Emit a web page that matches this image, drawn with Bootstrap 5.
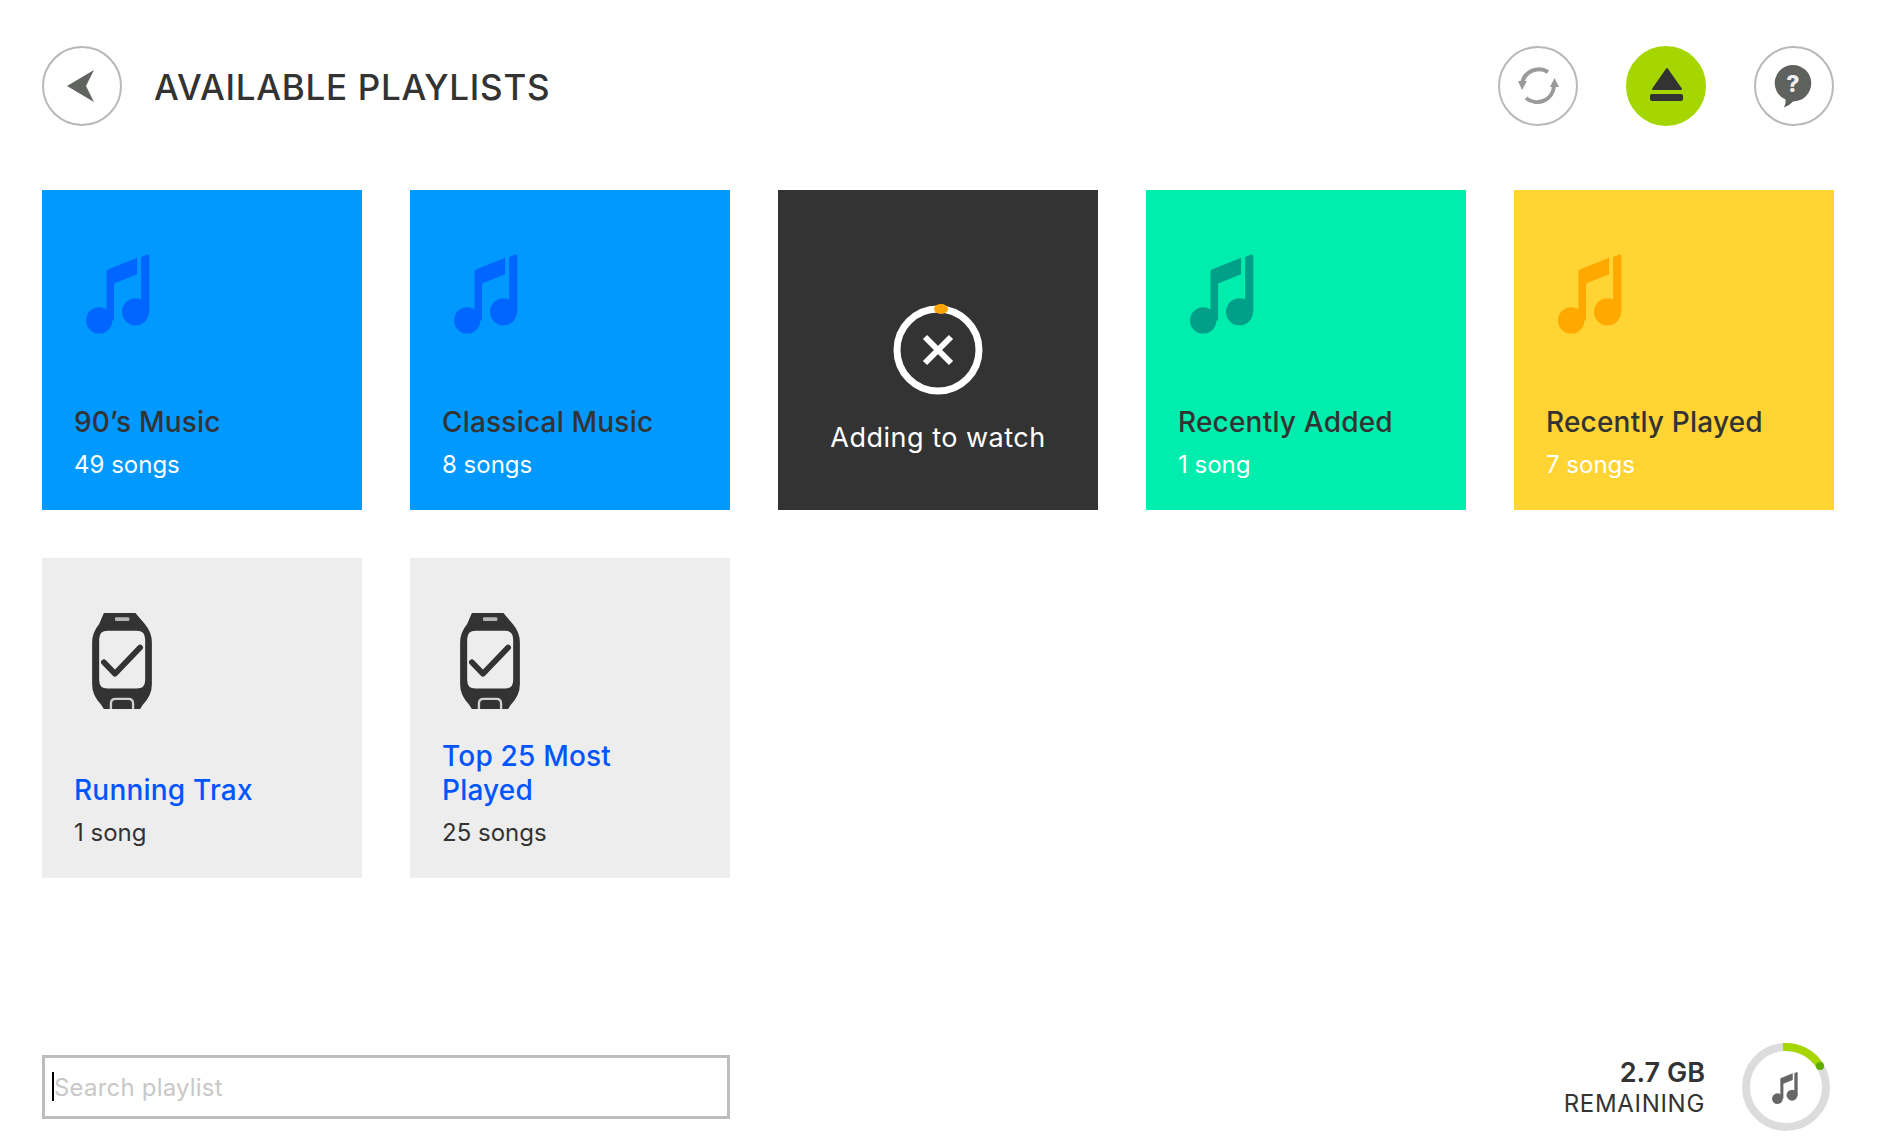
<!DOCTYPE html>
<html lang="en">
<head>
  <meta charset="UTF-8" />
  <meta name="viewport" content="width=device-width, initial-scale=1" />
  <title>Available Playlists</title>
  <link href="https://cdn.jsdelivr.net/npm/bootstrap@5.3.3/dist/css/bootstrap.min.css" rel="stylesheet" />

  <style>
    body {
      font-family: "Inter", "Liberation Sans", sans-serif;
      color: #333;
      background: #fff;
    }

    .page {
      height: 1144px;
      padding: 46px 46px 12px 42px;
    }

    .page-title {
      font-size: 35px;
      font-weight: 500;
      letter-spacing: 0.7px;
      margin: 2px 0 0 32px;
      color: #333;
    }

    .round-btn {
      width: 80px;
      height: 80px;
      padding: 0;
      border: 2px solid #b8b8b8;
      background: #fff;
      flex: none;
    }

    .round-btn svg {
      display: block;
      margin: -2px;
      width: 80px;
      height: 80px;
    }

    .round-btn.active-btn {
      background: #a6d600;
      border-color: #a6d600;
    }

    .head-actions {
      gap: 48px;
    }

    .tile-grid {
      grid-template-columns: repeat(5, 320px);
      gap: 48px;
      margin-top: 64px;
    }

    .tile {
      height: 320px;
      padding: 0 32px 28px 32px;
    }

    .tile-icon {
      display: block;
      margin: 64px 0 0 12px;
      width: 64px;
      height: 80px;
    }

    .watch-icon {
      margin: 55px 0 0 18px;
      width: 60px;
      height: 96px;
    }

    .tile-name {
      font-size: 28px;
      font-weight: 500;
      line-height: 34px;
      letter-spacing: 0.2px;
      color: #333;
    }

    .tile-count {
      font-size: 24px;
      line-height: 34px;
      margin-top: 9px;
      color: #fff;
    }

    .tile-blue { background: #0099ff; }
    .tile-blue .tile-icon { color: #0066ff; }
    .tile-teal { background: #00edae; }
    .tile-teal .tile-icon { color: #00a088; }
    .tile-yellow { background: #ffd433; }
    .tile-yellow .tile-icon { color: #ffa800; }
    .tile-grey { background: #ededed; }
    .tile-grey .tile-name { color: #0055ff; }
    .tile-grey .tile-count { color: #333; }

    .tile-busy {
      background: #333;
      color: #fff;
      padding: 0;
    }

    .busy-ring {
      width: 92px;
      height: 92px;
      margin-top: 114px;
    }

    .busy-text {
      font-size: 27px;
      font-weight: 400;
      line-height: 34px;
      letter-spacing: 0.5px;
      margin-top: 25px;
    }

    .search-box {
      width: 688px;
    }

    .search-box .form-control {
      height: 64px;
      border: 3px solid #bdbdbd;
      border-radius: 0;
      padding: 0 0 0 9px;
      font-size: 24px;
      letter-spacing: 0.2px;
      box-shadow: none;
    }

    .search-box .form-control::placeholder {
      color: #c8c8c8;
    }

    .fake-caret {
      position: absolute;
      left: 10px;
      top: 17px;
      width: 2px;
      height: 29px;
      background: #000;
    }

    .space-left {
      text-align: right;
      margin: 2px 36px 0 0;
    }

    .space-size {
      font-size: 27px;
      font-weight: 600;
      line-height: 32px;
    }

    .space-label {
      font-size: 24px;
      line-height: 30px;
      letter-spacing: 0.7px;
    }

    .space-ring {
      width: 90px;
      height: 90px;
      margin-right: 3px;
    }
  </style>
</head>

<body>
  <svg width="0" height="0" class="position-absolute">
    <defs>
      <symbol id="note" viewBox="78 58 194 240">
        <circle cx="118" cy="258" r="40" fill="currentColor" />
        <circle cx="228" cy="232" r="41" fill="currentColor" />
        <path fill="currentColor" d="M140 258V110Q140 105 146 103L233 68V118L163 146V258Z" />
        <path fill="currentColor" d="M245 66L262 59Q270 57 270 66V232H245Z" />
      </symbol>
      <symbol id="watch" viewBox="97 72 178 286">
        <path fill="#333" fill-rule="evenodd" d="M132 72H226L254 105Q275 130 275 160V285Q275 318 248 345L240 358H132L124 345Q97 318 97 285V160Q97 130 118 105ZM143 125Q118 125 118 150V272Q118 297 143 297H230Q255 297 255 272V150Q255 125 230 125Z" />
        <rect x="165" y="85" width="43" height="11" rx="4" fill="#b5b5b5" />
        <path d="M153 358V342Q153 328 167 328H205Q219 328 219 342V358" fill="none" stroke="#d0d0d0" stroke-width="7" />
        <path d="M132 219L165 253L240 175" fill="none" stroke="#333" stroke-width="17" stroke-linejoin="round" stroke-linecap="round" />
      </symbol>
    </defs>
  </svg>

  <div class="page d-flex flex-column">
    <!-- header -->
    <div class="d-flex align-items-center">
      <button type="button" class="btn round-btn rounded-circle" aria-label="Back">
        <svg viewBox="0 0 80 80"><path fill="#606360" d="M25 40L52 24L44 40L52 56Z" /></svg>
      </button>
      <h1 class="page-title">AVAILABLE PLAYLISTS</h1>
      <div class="d-flex head-actions ms-auto">
        <button type="button" class="btn round-btn rounded-circle" aria-label="Sync">
          <svg viewBox="0 0 80 80">
            <g fill="none" stroke="#9a9a9a" stroke-width="4">
              <path d="M50 26A17 17 0 0 0 24 38" />
              <path d="M28 52A17 17 0 0 0 56 40" />
            </g>
            <path fill="#9a9a9a" d="M20 35H29L24 44Z" />
            <path fill="#9a9a9a" d="M56.500 32L52 41H61Z" />
          </svg>
        </button>
        <button type="button" class="btn round-btn active-btn rounded-circle" aria-label="Eject">
          <svg viewBox="0 0 80 80">
            <path fill="#333" stroke="#333" stroke-width="2" stroke-linejoin="round" d="M41 23L27 43H55Z" />
            <rect x="24" y="48" width="33" height="7" rx="2" fill="#333" />
          </svg>
        </button>
        <button type="button" class="btn round-btn rounded-circle" aria-label="Help">
          <svg viewBox="0 0 80 80">
            <path fill="#5f615e" d="M39 19A18 18 0 0 1 39 55.500Q35 60 30 61.500Q32 57 31.500 53.500A18 18 0 0 1 39 19Z" />
            <text x="39" y="46" text-anchor="middle" font-family="Inter, sans-serif" font-size="23" font-weight="800" fill="#eee">?</text>
          </svg>
        </button>
      </div>
    </div>

    <!-- playlists -->
    <div class="d-grid tile-grid">
      <div class="tile tile-blue d-flex flex-column">
        <svg class="tile-icon"><use href="#note" /></svg>
        <div class="mt-auto tile-name">90’s Music</div>
        <div class="tile-count">49 songs</div>
      </div>
      <div class="tile tile-blue d-flex flex-column">
        <svg class="tile-icon"><use href="#note" /></svg>
        <div class="mt-auto tile-name">Classical Music</div>
        <div class="tile-count">8 songs</div>
      </div>
      <div class="tile tile-busy d-flex flex-column align-items-center">
        <svg class="busy-ring" viewBox="0 0 92 92">
          <circle cx="46" cy="46" r="41" fill="none" stroke="#fff" stroke-width="7" />
          <path d="M33 33L59 59M59 33L33 59" stroke="#fff" stroke-width="6" fill="none" />
          <ellipse cx="49" cy="5" rx="7" ry="5" fill="#ffa500" />
        </svg>
        <div class="busy-text">Adding to watch</div>
      </div>
      <div class="tile tile-teal d-flex flex-column">
        <svg class="tile-icon"><use href="#note" /></svg>
        <div class="mt-auto tile-name">Recently Added</div>
        <div class="tile-count">1 song</div>
      </div>
      <div class="tile tile-yellow d-flex flex-column">
        <svg class="tile-icon"><use href="#note" /></svg>
        <div class="mt-auto tile-name">Recently Played</div>
        <div class="tile-count">7 songs</div>
      </div>
      <div class="tile tile-grey d-flex flex-column">
        <svg class="tile-icon watch-icon"><use href="#watch" /></svg>
        <div class="mt-auto tile-name">Running Trax</div>
        <div class="tile-count">1 song</div>
      </div>
      <div class="tile tile-grey d-flex flex-column">
        <svg class="tile-icon watch-icon"><use href="#watch" /></svg>
        <div class="mt-auto tile-name">Top 25 Most<br />Played</div>
        <div class="tile-count">25 songs</div>
      </div>
    </div>

    <!-- footer -->
    <div class="d-flex align-items-center justify-content-between mt-auto">
      <div class="search-box position-relative">
        <input type="text" class="form-control" placeholder="Search playlist" />
        <span class="fake-caret"></span>
      </div>
      <div class="d-flex align-items-center">
        <div class="space-left">
          <div class="space-size">2.7 GB</div>
          <div class="space-label">REMAINING</div>
        </div>
        <svg class="space-ring" viewBox="0 0 90 90">
          <circle cx="45" cy="45" r="40" fill="none" stroke="#dcdcdc" stroke-width="8" />
          <path d="M42 5A40 40 0 0 1 79 24" fill="none" stroke="#a6d600" stroke-width="8" />
          <circle cx="79" cy="24" r="4" fill="#5cad00" />
          <svg x="30" y="30" width="28" height="32" color="#666"><use href="#note" /></svg>
        </svg>
      </div>
    </div>
  </div>

  <script src="https://cdn.jsdelivr.net/npm/bootstrap@5.3.3/dist/js/bootstrap.bundle.min.js"></script>
</body>
</html>
